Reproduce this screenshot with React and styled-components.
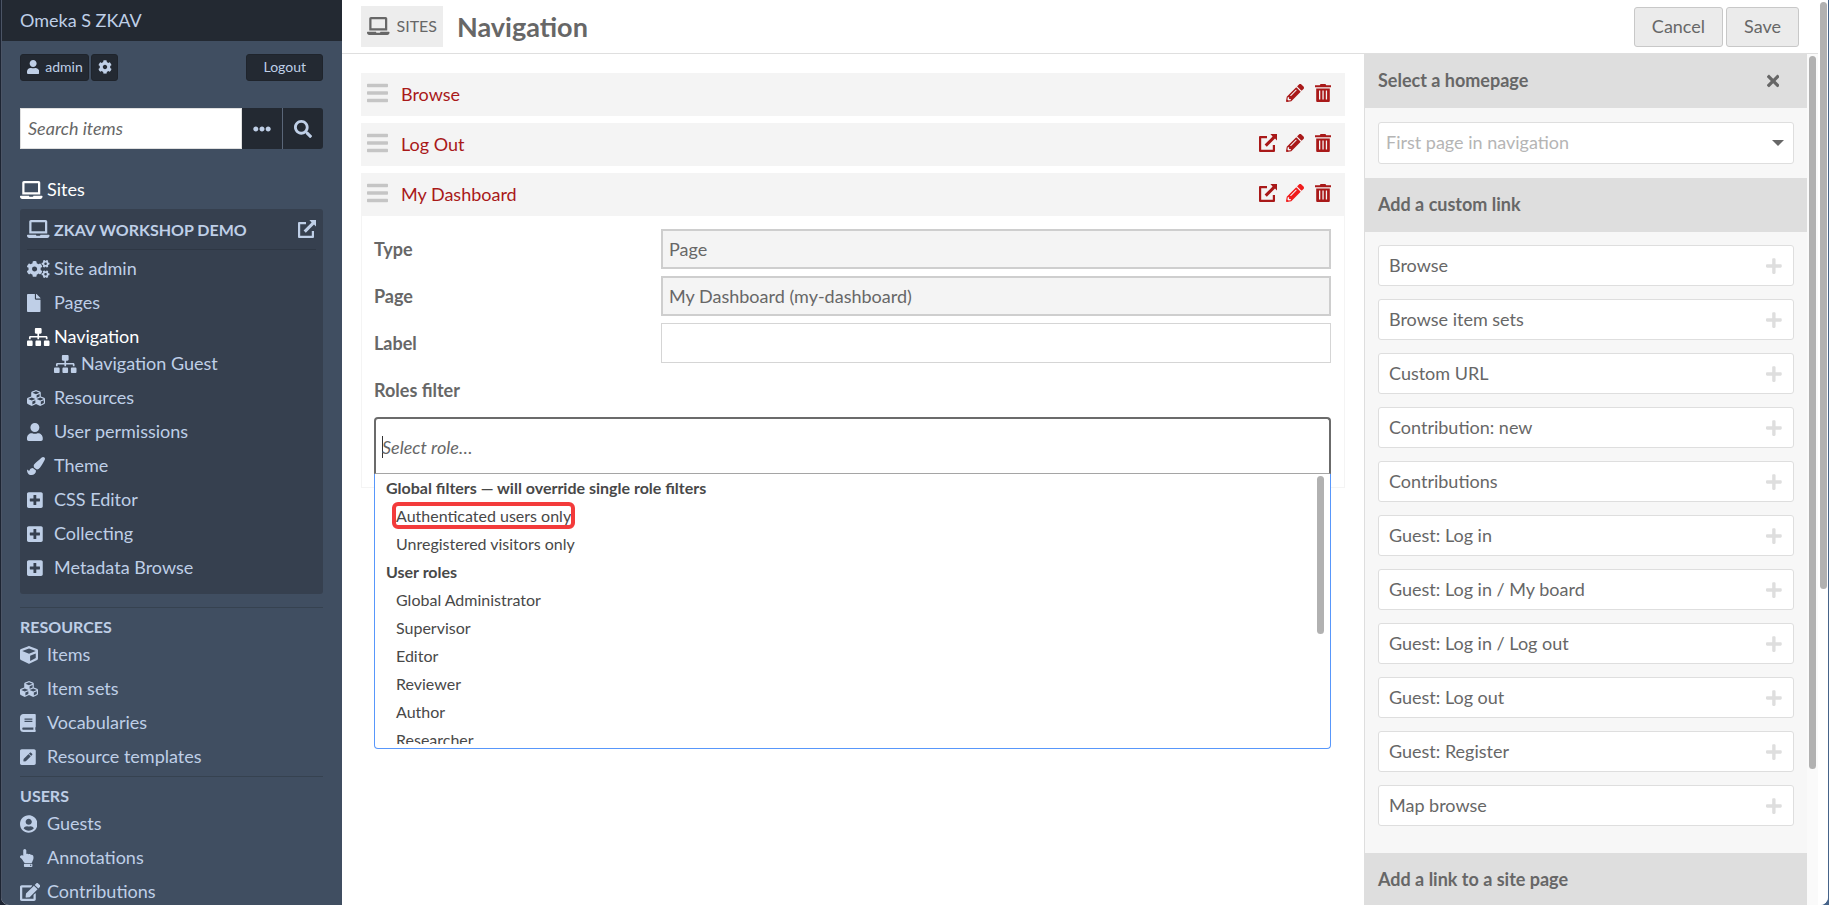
import React, { useState } from 'react';
import styled, { createGlobalStyle } from 'styled-components';
import { IconContext } from 'react-icons';
import {
  FaBars,
  FaBook,
  FaCog,
  FaCogs,
  FaCube,
  FaCubes,
  FaEdit,
  FaEllipsisH,
  FaFile,
  FaHandPointUp,
  FaLaptop,
  FaPaintBrush,
  FaPencilAlt,
  FaPenSquare,
  FaPlus,
  FaPlusSquare,
  FaSearch,
  FaSitemap,
  FaTimes,
  FaUser,
  FaUserCircle,
} from 'react-icons/fa';

// a relative size keeps each icon at the proportions of its own viewBox
const iconDefaults = { size: '100%' };

const siteLinks = [
  { label: 'Site admin', icon: FaCogs },
  { label: 'Pages', icon: FaFile },
  { label: 'Navigation', icon: FaSitemap, active: true, children: [{ label: 'Navigation Guest', icon: FaSitemap }] },
  { label: 'Resources', icon: FaCubes },
  { label: 'User permissions', icon: FaUser },
  { label: 'Theme', icon: FaPaintBrush },
  { label: 'CSS Editor', icon: FaPlusSquare },
  { label: 'Collecting', icon: FaPlusSquare },
  { label: 'Metadata Browse', icon: FaPlusSquare },
];

const sections = [
  {
    title: 'Resources',
    links: [
      { label: 'Items', icon: FaCube },
      { label: 'Item sets', icon: FaCubes },
      { label: 'Vocabularies', icon: FaBook },
      { label: 'Resource templates', icon: FaPenSquare },
    ],
  },
  {
    title: 'Users',
    links: [
      { label: 'Guests', icon: FaUserCircle },
      { label: 'Annotations', icon: FaHandPointUp },
      { label: 'Contributions', icon: FaEdit },
    ],
  },
];

const roleGroups = [
  {
    title: 'Global filters — will override single role filters',
    options: ['Authenticated users only', 'Unregistered visitors only'],
  },
  {
    title: 'User roles',
    options: ['Global Administrator', 'Supervisor', 'Editor', 'Reviewer', 'Author', 'Researcher'],
  },
];

const customLinks = [
  'Browse',
  'Browse item sets',
  'Custom URL',
  'Contribution: new',
  'Contributions',
  'Guest: Log in',
  'Guest: Log in / My board',
  'Guest: Log in / Log out',
  'Guest: Log out',
  'Guest: Register',
  'Map browse',
];

const ExternalIcon = () => (
  <svg viewBox="0 0 18 18" fill="currentColor" aria-hidden="true">
    <path d="M1.5 2H8v2.2H2.2v11.6h11.6V11H16v6q0 1-1 1H1q-1 0-1-1V3q0-1 1-1z" />
    <path d="M11.4 0H18v6.6l-2-2-8.2 8.2-2.2-2.2 8-8z" />
  </svg>
);

const TrashIcon = () => (
  <svg viewBox="0 0 16 18" aria-hidden="true">
    <path fill="currentColor" d="M5.5 0h5l.7 1.2H16v2H0v-2h4.8z" />
    <path
      fill="currentColor"
      fillRule="evenodd"
      d="M1.2 4.6h13.6V17q0 1-1 1H2.2q-1 0-1-1zM4 6.6v9h1.3v-9zm3.4 0v9h1.3v-9zm3.4 0v9h1.3v-9z"
    />
  </svg>
);

const SideLink = ({ link, nested }) => {
  const Icon = link.icon;
  return (
    <NavItem $nested={nested} $hasChildren={Boolean(link.children)}>
      <NavLink href="#" $active={link.active}>
        <IconCell>
          <Icon />
        </IconCell>
        {link.label}
      </NavLink>
    </NavItem>
  );
};

const Sidebar = () => (
  <SidebarColumn>
    <Brand href="#">Omeka S ZKAV</Brand>
    <SidebarBody>
      <UserBar>
        <UserButton href="#">
          <FaUser />
          admin
        </UserButton>
        <UserButton href="#" aria-label="User settings">
          <FaCog />
        </UserButton>
        <LogoutButton href="#">Logout</LogoutButton>
      </UserBar>
      <SearchForm onSubmit={(e) => e.preventDefault()}>
        <SearchInput type="text" placeholder="Search items" aria-label="Search items" />
        <SearchButton type="button" aria-label="Advanced options">
          <FaEllipsisH />
        </SearchButton>
        <SearchButton type="submit" aria-label="Search" $last>
          <FaSearch />
        </SearchButton>
      </SearchForm>
      <SitesLink href="#">
        <IconCell>
          <FaLaptop />
        </IconCell>
        Sites
      </SitesLink>
      <SitePanel>
        <SiteTitle>
          <IconCell>
            <FaLaptop />
          </IconCell>
          <span>ZKAV Workshop Demo</span>
          <a href="#" aria-label="View site">
            <ExternalIcon />
          </a>
        </SiteTitle>
        <NavList>
          {siteLinks.map((link) => (
            <React.Fragment key={link.label}>
              <SideLink link={link} />
              {link.children && link.children.map((child) => <SideLink key={child.label} link={child} nested />)}
            </React.Fragment>
          ))}
        </NavList>
      </SitePanel>
      {sections.map((section) => (
        <Section key={section.title}>
          <h2>{section.title}</h2>
          <NavList>
            {section.links.map((link) => (
              <SideLink key={link.label} link={link} />
            ))}
          </NavList>
        </Section>
      ))}
    </SidebarBody>
  </SidebarColumn>
);

const LinkRow = ({ label, external, editing }) => (
  <Row>
    <FaBars className="handle" />
    <a href="#">{label}</a>
    <RowActions>
      {external && (
        <RowButton type="button" aria-label={`View ${label}`}>
          <ExternalIcon />
        </RowButton>
      )}
      <RowButton type="button" aria-label={`Edit ${label}`} $bright={editing}>
        <FaPencilAlt />
      </RowButton>
      <RowButton type="button" aria-label={`Remove ${label}`} $spaced>
        <TrashIcon />
      </RowButton>
    </RowActions>
  </Row>
);

const RolesFilter = () => {
  const [role, setRole] = useState('');
  return (
    <Chosen>
      <ChosenBox>
        <Caret />
        <input
          id="roles"
          type="text"
          placeholder="Select role…"
          value={role}
          onChange={(e) => setRole(e.target.value)}
        />
      </ChosenBox>
      <Dropdown>
        <OptionList>
          {roleGroups.map((group) => (
            <React.Fragment key={group.title}>
              <OptionGroup>{group.title}</OptionGroup>
              {group.options.map((option) => (
                <Option key={option}>
                  <OptionText $marked={option === 'Authenticated users only'}>{option}</OptionText>
                </Option>
              ))}
            </React.Fragment>
          ))}
        </OptionList>
        <DropdownThumb />
      </Dropdown>
    </Chosen>
  );
};

const App = () => {
  const [label, setLabel] = useState('');

  return (
    <IconContext.Provider value={iconDefaults}>
      <GlobalStyle />
      <Frame>
        <Sidebar />
        <Page>
          <PageHeader>
            <SitesButton href="#">
              <FaLaptop />
              Sites
            </SitesButton>
            <h1>Navigation</h1>
            <HeaderActions>
              <ActionButton type="button">Cancel</ActionButton>
              <ActionButton type="button">Save</ActionButton>
            </HeaderActions>
          </PageHeader>
          <Columns>
            <Content>
              <LinkRow label="Browse" />
              <LinkRow label="Log Out" external />
              <div>
                <LinkRow label="My Dashboard" external editing />
                <EditBox>
                  <Field>
                    <label htmlFor="type">Type</label>
                    <TextInput id="type" type="text" value="Page" readOnly $fixed />
                  </Field>
                  <Field>
                    <label htmlFor="page">Page</label>
                    <TextInput id="page" type="text" value="My Dashboard (my-dashboard)" readOnly $fixed />
                  </Field>
                  <Field>
                    <label htmlFor="label">Label</label>
                    <TextInput id="label" type="text" value={label} onChange={(e) => setLabel(e.target.value)} />
                  </Field>
                  <Field>
                    <label htmlFor="roles">Roles filter</label>
                  </Field>
                  <RolesFilter />
                </EditBox>
              </div>
            </Content>
            <Aside>
              <AsideBody>
                <AsideHeader>
                  Select a homepage
                  <CloseButton type="button" aria-label="Close">
                    <FaTimes />
                  </CloseButton>
                </AsideHeader>
                <HomepageWrap>
                  <HomepageSelect aria-label="Homepage" defaultValue="">
                    <option value="">First page in navigation</option>
                  </HomepageSelect>
                  <SelectArrow />
                </HomepageWrap>
                <AsideHeader>Add a custom link</AsideHeader>
                <LinkOptions>
                  {customLinks.map((name) => (
                    <LinkOption key={name} type="button">
                      {name}
                      <FaPlus />
                    </LinkOption>
                  ))}
                </LinkOptions>
                <AsideHeader>Add a link to a site page</AsideHeader>
              </AsideBody>
              <Track>
                <Thumb $share={84} />
              </Track>
            </Aside>
          </Columns>
        </Page>
        <Track $outer>
          <Thumb $share={65} />
        </Track>
      </Frame>
    </IconContext.Provider>
  );
};

export default App;

const GlobalStyle = createGlobalStyle`
  * {
    box-sizing: border-box;
  }
  body {
    margin: 0;
    background: linear-gradient(to right, #1d2432, #46648a);
    color: #676767;
    font-family: Lato, "Open Sans", sans-serif;
    font-size: 18px;
    line-height: 27px;
  }
  a {
    color: inherit;
    text-decoration: none;
  }
  button, input, select {
    font: inherit;
    color: inherit;
    margin: 0;
  }
  button {
    cursor: pointer;
  }
  svg {
    display: block;
    flex: none;
    width: auto;
    height: 18px;
  }
`;

const Frame = styled.div`
  display: flex;
  height: 100vh;
  margin: 0 1px;
  overflow: hidden;
  background-color: #fff;
  border-radius: 0 0 8px 8px;
`;

const SidebarColumn = styled.nav`
  flex: none;
  width: 341px;
  overflow: hidden;
  background-color: #404e61;
  border-left: 1px solid #4b5465;
  color: #bfcfe7;
`;

const Brand = styled.a`
  display: block;
  padding: 7px 18px;
  background-color: #232932;
`;

const SidebarBody = styled.div`
  padding: 13px 19px 0 18px;
`;

const UserBar = styled.div`
  display: flex;
  gap: 2px;
  font-size: 14px;
`;

const UserButton = styled.a`
  display: flex;
  align-items: center;
  gap: 6px;
  height: 27px;
  padding: 0 5px 2px 6px;
  background-color: #232932;
  border: 1px solid #1f242c;
  border-radius: 3px;
  svg {
    height: 14px;
  }
`;

const LogoutButton = styled(UserButton)`
  margin-left: auto;
  padding: 0 16px 2px;
`;

const SearchForm = styled.form`
  display: flex;
  height: 41px;
  margin: 27px 0;
`;

const SearchInput = styled.input`
  flex: 1;
  min-width: 0;
  padding: 0 7px;
  background-color: #fff;
  border: 1px solid #dfdfdf;
  border-radius: 0;
  color: #676767;
  &::placeholder {
    color: #676767;
    font-style: italic;
    opacity: 1;
  }
`;

const SearchButton = styled.button`
  display: flex;
  align-items: center;
  justify-content: center;
  width: ${({ $last }) => ($last ? '41px' : '40px')};
  padding: 0;
  background-color: #232932;
  border: none;
  border-left: ${({ $last }) => ($last ? '1px solid #5a6678' : 'none')};
  border-radius: ${({ $last }) => ($last ? '0 3px 3px 0' : '0')};
  color: #bfcfe7;
`;

const IconCell = styled.span`
  display: flex;
  flex: none;
  width: 27px;
`;

const SitesLink = styled.a`
  display: flex;
  align-items: center;
  color: #fff;
`;

const SitePanel = styled.div`
  margin: 6px 0 13px;
  padding: 0 7px 9px;
  background-color: #36404f;
  border-radius: 3px;
`;

const SiteTitle = styled.div`
  display: flex;
  align-items: center;
  height: 41px;
  margin-bottom: 2px;
  border-bottom: 1px solid #2e3744;
  font-size: 16px;
  font-weight: bold;
  text-transform: uppercase;
  a {
    margin-left: auto;
  }
`;

const NavList = styled.ul`
  margin: 0;
  padding: 0;
  list-style: none;
`;

const NavItem = styled.li`
  padding-top: ${({ $nested }) => ($nested ? '0' : '3px')};
  padding-bottom: ${({ $hasChildren }) => ($hasChildren ? '0' : '4px')};
  padding-left: ${({ $nested }) => ($nested ? '27px' : '0')};
`;

const NavLink = styled.a`
  display: flex;
  align-items: center;
  color: ${({ $active }) => ($active ? '#fff' : '#bfcfe7')};
`;

const Section = styled.section`
  margin-bottom: 2px;
  padding-top: 8px;
  border-top: 1px solid #364250;
  h2 {
    margin: 0;
    font-size: 16px;
    line-height: 22px;
    text-transform: uppercase;
  }
`;

const Page = styled.div`
  display: flex;
  flex: 1;
  flex-direction: column;
  min-width: 0;
`;

const PageHeader = styled.header`
  display: flex;
  flex: none;
  align-items: center;
  height: 54px;
  padding: 0 19px;
  border-bottom: 1px solid #dfdfdf;
  h1 {
    margin: 0 0 0 14px;
    font-size: 27px;
  }
`;

const SitesButton = styled.a`
  display: flex;
  align-items: center;
  gap: 7px;
  height: 41px;
  padding: 0 6px 2px;
  background-color: #ededed;
  font-size: 16px;
  text-transform: uppercase;
`;

const HeaderActions = styled.div`
  display: flex;
  gap: 3px;
  margin-left: auto;
`;

const ActionButton = styled.button`
  height: 40px;
  padding: 0 17px;
  background-color: #ebebeb;
  border: 1px solid #c8c8c8;
  border-radius: 3px;
`;

const Columns = styled.div`
  display: flex;
  flex: 1;
  min-height: 0;
`;

const Content = styled.main`
  display: flex;
  flex: 1;
  flex-direction: column;
  gap: 7px;
  min-width: 0;
  padding: 19px;
`;

const Row = styled.div`
  display: flex;
  align-items: center;
  height: 43px;
  padding: 0 14px 0 6px;
  background-color: #f4f4f4;
  color: #a91919;
  .handle {
    height: 24px;
    margin: 0 13px 3px 0;
    color: #c5c5c5;
  }
`;

const RowActions = styled.div`
  display: flex;
  gap: 9px;
  margin-left: auto;
  padding-bottom: 3px;
`;

const RowButton = styled.button`
  margin-left: ${({ $spaced }) => ($spaced ? '2px' : '0')};
  padding: 0;
  background: none;
  border: none;
  color: ${({ $bright }) => ($bright ? '#f01c1c' : '#a91919')};
`;

const EditBox = styled.div`
  padding: 13px 13px 13px 12px;
  border: 1px solid #f4f4f4;
  border-top: none;
`;

const Field = styled.div`
  display: flex;
  align-items: center;
  height: 40px;
  margin-bottom: 7px;
  label {
    width: 30%;
    font-weight: bold;
  }
`;

const TextInput = styled.input`
  flex: 1;
  height: 40px;
  min-width: 0;
  padding: 0 6px;
  background-color: ${({ $fixed }) => ($fixed ? '#f4f4f4' : '#fff')};
  border: ${({ $fixed }) => ($fixed ? '2px solid #cecece' : '1px solid #d5d5d5')};
  border-radius: 0;
`;

const Chosen = styled.div`
  position: relative;
`;

const ChosenBox = styled.div`
  display: flex;
  align-items: center;
  height: 57px;
  padding: 2px 7px 0 6px;
  border: 2px solid #6b6b6b;
  border-bottom: 1px solid #a5a5a5;
  border-radius: 4px 4px 0 0;
  input {
    flex: 1;
    padding: 0;
    background: none;
    border: none;
    outline: none;
  }
  input::placeholder {
    color: #676767;
    font-style: italic;
    opacity: 1;
  }
`;

const Caret = styled.span`
  width: 1px;
  height: 22px;
  margin-right: -1px;
  background-color: #333;
`;

const Dropdown = styled.div`
  position: absolute;
  top: 100%;
  right: 0;
  left: 0;
  padding: 0 4px 4px;
  background-color: #fff;
  border: 1px solid #5897fb;
  border-top: none;
  border-radius: 0 0 4px 4px;
`;

const OptionList = styled.ul`
  height: 270px;
  margin: 0;
  padding: 0;
  overflow: hidden;
  color: #484848;
  font-size: 16px;
  line-height: 28px;
  list-style: none;
`;

const OptionGroup = styled.li`
  padding-left: 7px;
  font-weight: bold;
`;

const Option = styled.li`
  padding-left: 17px;
`;

const OptionText = styled.span`
  position: relative;
  &::after {
    content: ${({ $marked }) => ($marked ? '""' : 'none')};
    position: absolute;
    inset: -4px;
    border: 4px solid #f33b3b;
    border-radius: 6px;
  }
`;

const DropdownThumb = styled.div`
  position: absolute;
  top: 2px;
  right: 6px;
  width: 7px;
  height: 158px;
  background-color: #b1b1b1;
  border-radius: 4px;
`;

const Aside = styled.aside`
  display: flex;
  flex: none;
  width: 454px;
  overflow: hidden;
  background-color: #f7f7f7;
  border-left: 1px solid #dedede;
`;

const AsideBody = styled.div`
  flex: 1;
`;

const AsideHeader = styled.h3`
  display: flex;
  align-items: center;
  justify-content: space-between;
  height: 54px;
  margin: 0;
  padding: 0 28px 1px 13px;
  background-color: #dedede;
  font-size: 18px;
`;

const CloseButton = styled.button`
  padding: 0;
  background: none;
  border: none;
`;

const HomepageWrap = styled.div`
  position: relative;
  padding: 14px 13px;
`;

const HomepageSelect = styled.select`
  display: block;
  width: 100%;
  height: 42px;
  padding: 0 7px 2px;
  appearance: none;
  background-color: #fff;
  border: 1px solid #dedede;
  border-radius: 3px;
  color: #b5b5b5;
`;

const SelectArrow = styled.span`
  position: absolute;
  top: 32px;
  right: 23px;
  border: 6px solid transparent;
  border-top-color: #676767;
  border-bottom: none;
  pointer-events: none;
`;

const LinkOptions = styled.div`
  display: flex;
  flex-direction: column;
  gap: 13px;
  padding: 13px 13px 27px;
`;

const LinkOption = styled.button`
  display: flex;
  align-items: center;
  justify-content: space-between;
  height: 41px;
  padding: 0 11px 0 10px;
  background-color: #fff;
  border: 1px solid #dedede;
  border-radius: 3px;
  svg {
    color: #dedede;
  }
`;

const Track = styled.div`
  flex: none;
  width: ${({ $outer }) => ($outer ? '10px' : '11px')};
  padding: 2px 2px 0;
  background-color: ${({ $outer }) => ($outer ? '#fff' : '#fafafa')};
`;

const Thumb = styled.div`
  width: 7px;
  height: ${({ $share }) => $share}%;
  background-color: #b1b1b1;
  border-radius: 4px;
`;
